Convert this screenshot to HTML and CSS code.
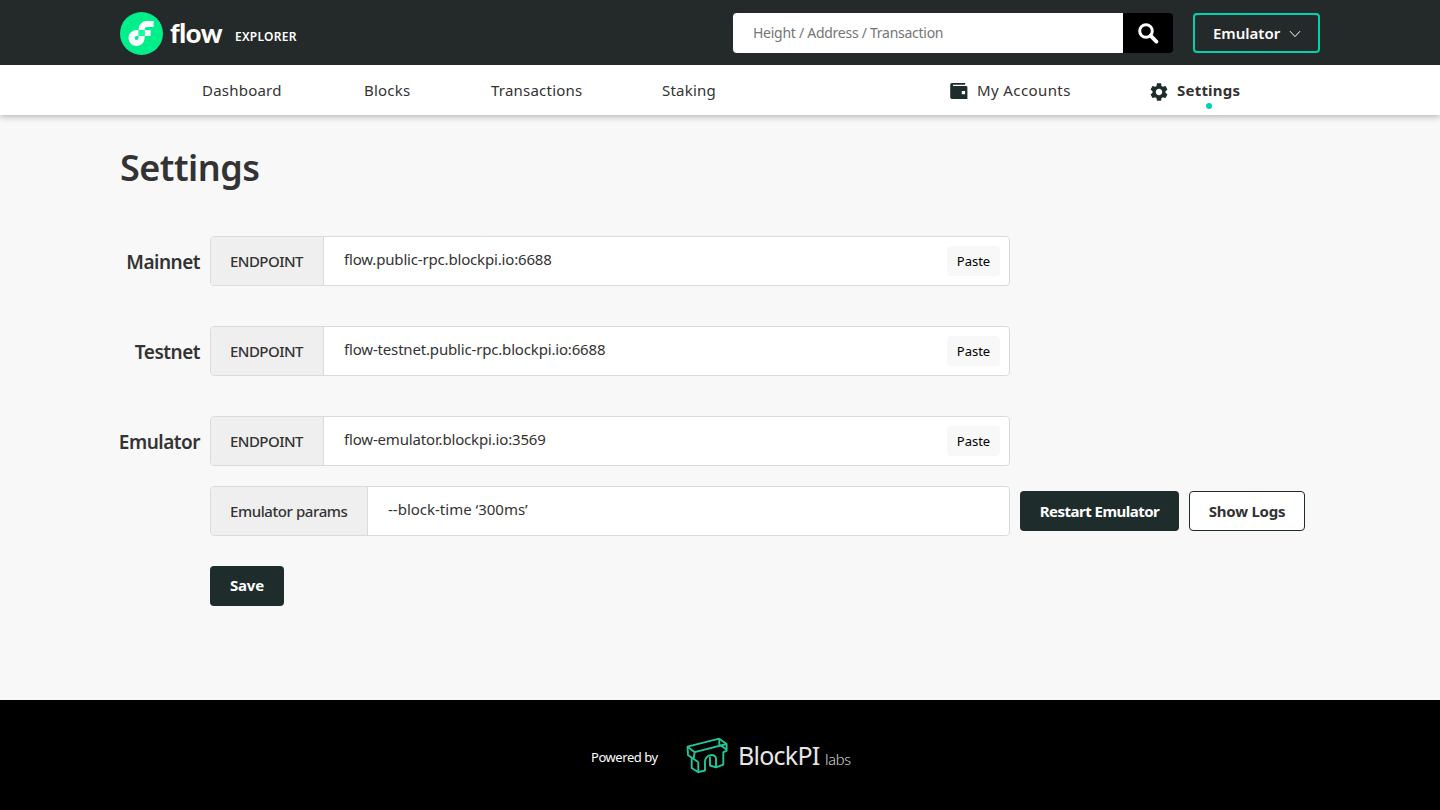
FILE: index.html
```html
<!DOCTYPE html>
<html lang="en">
<head>
<meta charset="utf-8">
<title>Flow Explorer - Settings</title>
<link rel="stylesheet" href="styles.css">
</head>
<body>
<header class="header">
  <div class="container header-row">
    <a class="brand">
      <svg class="brand-mark" viewBox="0 0 101 101"><circle cx="50.5" cy="50.5" r="50.5" fill="#00ef8b"/><path fill="#fff" d="M57.82 42.21h14.12v14.12H57.82zM43.71 61.09a4.77 4.77 0 1 1-4.77-4.76h4.77V42.21h-4.77A18.89 18.89 0 1 0 57.82 61.09v-4.76H43.71ZM63.12 35.12H79V21H63.12a19.43 19.43 0 0 0-19.41 19.42v1.79h14.11v-1.79a5.3 5.3 0 0 1 5.3-5.3Z"/><path fill="#16ff99" d="M43.71 42.21h14.11v14.12H43.71z"/></svg>
      <span class="brand-name">flow</span>
      <span class="brand-sub">EXPLORER</span>
    </a>
    <div class="search">
      <div class="search-field">Height / Address / Transaction</div>
      <button class="search-button"><svg width="22" height="22" viewBox="0 0 22 22" fill="none" stroke="#fff"><circle cx="9" cy="9" r="6.3" stroke-width="3"/><path d="M13.6 13.6 19.4 19.6" stroke-width="3.8" stroke-linecap="round"/></svg></button>
    </div>
    <button class="network">Emulator<svg class="chevron" width="12" height="8" viewBox="0 0 12 8" fill="none" stroke="#fff"><path d="M1 1.200 6 6.600 11 1.200"/></svg></button>
  </div>
</header>
<nav class="nav">
  <div class="container nav-row">
    <a class="nav-item">Dashboard</a>
    <a class="nav-item">Blocks</a>
    <a class="nav-item">Transactions</a>
    <a class="nav-item">Staking</a>
    <a class="nav-item accounts"><svg class="nav-icon" width="18" height="18" viewBox="0 0 18 18"><path fill="#1f2c2c" fill-rule="evenodd" d="M2 1h13.2v1.700H3v1.400h13.200A1.300 1.300 0 0 1 17.400 5.400V17H2A1.800 1.800 0 0 1 .2 15.200V2.800A1.800 1.800 0 0 1 2 1ZM11.800 9h3.300v3.300h-3.300Z"/></svg>My Accounts</a>
    <a class="nav-item settings"><svg class="nav-icon gear" width="18" height="18" viewBox="2 2 20 20"><path fill="#1f2c2c" d="M19.140 12.940c.04-.3.06-.61.06-.94s-.02-.64-.07-.94l2.030-1.580c.18-.14.23-.41.120-.61l-1.920-3.320c-.12-.22-.37-.29-.59-.22l-2.390.96c-.5-.38-1.030-.7-1.620-.94l-.36-2.540c-.04-.24-.24-.41-.48-.41h-3.840c-.24 0-.43.17-.47.41l-.36 2.540c-.59.24-1.130.57-1.620.94l-2.390-.96c-.22-.08-.47 0-.59.220L2.740 8.870c-.12.21-.08.47.120.61l2.030 1.580c-.05.3-.09.63-.09.94s.02.64.07.940l-2.030 1.580c-.18.14-.23.41-.12.61l1.920 3.320c.12.22.37.29.59.220l2.390-.96c.5.38 1.030.7 1.620.940l.36 2.540c.05.24.24.41.48.410h3.840c.24 0 .44-.17.47-.410l.36-2.540c.59-.24 1.130-.56 1.620-.940l2.390.96c.22.080.47 0 .59-.220l1.920-3.320c.12-.22.07-.47-.12-.610l-2.010-1.580ZM12 15.600c-1.980 0-3.600-1.620-3.600-3.600s1.620-3.600 3.600-3.600 3.600 1.620 3.600 3.600-1.620 3.600-3.600 3.600Z"/></svg>Settings</a>
  </div>
</nav>
<main class="main">
  <div class="container">
    <h1 class="title">Settings</h1>
    <form class="form">
      <div class="row"><label class="row-label">Mainnet</label><div class="field"><span class="field-tag">ENDPOINT</span><span class="field-value">flow.public-rpc.blockpi.io:6688</span><button class="paste">Paste</button></div></div>
      <div class="row"><label class="row-label">Testnet</label><div class="field"><span class="field-tag">ENDPOINT</span><span class="field-value">flow-testnet.public-rpc.blockpi.io:6688</span><button class="paste">Paste</button></div></div>
      <div class="row"><label class="row-label">Emulator</label><div class="field"><span class="field-tag">ENDPOINT</span><span class="field-value">flow-emulator.blockpi.io:3569</span><button class="paste">Paste</button></div></div>
      <div class="row params"><div class="field"><span class="field-tag wide">Emulator params</span><span class="field-value flags">--block-time ‘300ms’</span></div><button class="button restart">Restart Emulator</button><button class="button outline">Show Logs</button></div>
      <button class="button save">Save</button>
    </form>
  </div>
</main>
<footer class="footer">
  <span class="powered">Powered by</span>
  <svg class="bridge" width="42" height="38" viewBox="0 0 42 38" fill="none" stroke="#21c69b" stroke-width="1.9" stroke-linejoin="round"><path d="M1.500 9.700 33.300 1.700 40.600 7v6.700L37.300 15.300V27.700L30 30.300V21.500C29.500 16 20 17 19 24V33.500L12.300 35.200 5.700 31V20.800L2 18Z"/><path d="M1.500 9.700 8.700 15.200 40.600 7M8.700 15.200 7.500 22.500M12.300 25V35M33.300 1.700V7.500L40.600 12.500M5.700 20.800 12.300 25M24 19.500V28.500L30 30.300"/></svg>
  <span class="block-name">BlockPI</span><span class="block-labs">labs</span>
</footer>
</body>
</html>
```
FILE: styles.css
```css
* { box-sizing: border-box; }
body { margin: 0; background: #f8f8f8; color: #333; font-family: "Noto Sans", sans-serif; }
button { border: 0; padding: 0; font: inherit; white-space: nowrap; }
.container { width: 1200px; margin: 0 auto; }
.header { height: 65px; background: #242a2a; }
.header-row { height: 65px; display: flex; align-items: center; }
.brand { display: flex; align-items: center; color: #fff; margin-right: auto; }
.brand-mark { width: 43px; height: 43px; margin-top: 1px; }
.brand-name { width: 53px; font: 900 27px/40px Lato, sans-serif; letter-spacing: -.4px; margin-left: 7px; }
.brand-sub { font: 600 12px/20px "Noto Sans", sans-serif; letter-spacing: .25px; margin: 8px 0 0 12px; }
.search { display: flex; width: 440px; height: 40px; border-radius: 4px; overflow: hidden; margin-right: 20px; }
.search-field { flex: 1; background: #fff; color: #757575; font-size: 14px; line-height: 40px; letter-spacing: -.27px; padding-left: 20px; }
.search-button { width: 50px; background: #000; display: flex; align-items: center; justify-content: center; }
.network { width: 127px; height: 40px; border: 2px solid #00d2b0; border-radius: 4px; background: transparent; color: #fff; display: flex; align-items: center; padding-left: 18px; gap: 9px; font-weight: 600; font-size: 15px; line-height: 38px; }
.chevron { margin-top: 2px; }
.nav { height: 50px; background: #fff; box-shadow: 0 2px 6px rgba(31, 44, 44, .3); }
.nav-row { height: 50px; display: grid; grid-template-columns: 162px 127px 171px 288px 200px 1fr; padding-left: 82px; align-items: center; }
.nav-item { display: flex; align-items: center; font-size: 15px; line-height: 24px; letter-spacing: .22px; position: relative; }
.nav-icon { margin: 2px 9px 0 0; }
.gear { margin-top: 4px; }
.accounts { letter-spacing: .4px; }
.settings { font-weight: 700; }
.settings::after { content: ""; position: absolute; width: 6px; height: 6px; border-radius: 50%; background: #00d2b0; left: 56px; top: 25px; }
.main { height: 585px; padding-top: 28px; }
.title { margin: 0; font-weight: 600; font-size: 36px; line-height: 50px; letter-spacing: -.5px; }
.form { margin-top: 43px; }
.row { display: flex; align-items: center; height: 50px; margin-bottom: 40px; margin-left: -10px; }
.row-label { width: 90px; margin-right: 10px; padding-top: 1px; text-align: right; font-size: 19px; font-weight: 600; letter-spacing: -.5px; }
.row:nth-child(3) { margin-bottom: 20px; }
.row.params { margin-left: 90px; margin-bottom: 30px; }
.field { width: 800px; height: 50px; display: flex; align-items: center; background: #fff; border: 1px solid #d5dedd; border-radius: 4px; overflow: hidden; padding-right: 9px; }
.field-tag { width: 113px; height: 48px; background: #efefef; border-right: 1px solid #d5dedd; padding-left: 19px; font-size: 15px; font-weight: 500; line-height: 49px; letter-spacing: -.53px; white-space: nowrap; }
.field-tag.wide { width: 157px; letter-spacing: -.42px; }
.field-value { flex: 1; padding-left: 20px; font-size: 15px; line-height: 45px; height: 48px; letter-spacing: -.17px; }
.field-value.flags { letter-spacing: 0; }
.paste { width: 53px; height: 30px; background: #f8f8f8; border-radius: 4px; color: #000; font-size: 13px; }
.button { height: 40px; border-radius: 4px; background: #1f2c2c; color: #fff; font-size: 15px; font-weight: 700; }
.restart { width: 159px; margin-left: 10px; letter-spacing: -.52px; }
.outline { width: 116px; margin-left: 10px; border: 1px solid #1f2c2c; background: #fff; color: #333; letter-spacing: -.25px; }
.save { width: 74px; margin-left: 90px; padding-bottom: 2px; display: block; letter-spacing: -.2px; }
.footer { height: 110px; background: #000; color: #fff; display: flex; align-items: center; padding-left: 591px; }
.powered { width: 67px; font-size: 13px; letter-spacing: -.45px; white-space: nowrap; margin-top: 4px; }
.bridge { margin: 2px 0 0 28px; }
.block-name { width: 82px; font-size: 25px; letter-spacing: -.75px; margin-left: 10px; color: #e6e6e6; }
.block-labs { font: 300 16px/20px Lato, sans-serif; letter-spacing: -.3px; margin: 8px 0 0 5px; color: #e6e6e6; }
```
